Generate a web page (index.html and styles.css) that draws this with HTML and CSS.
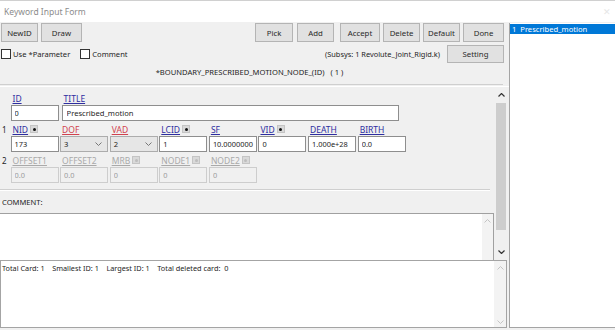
FILE: index.html
```html
<!DOCTYPE html>
<html lang="en">
<head>
  <meta charset="UTF-8">
  <title>Keyword Input Form</title>
  <link rel="stylesheet" href="styles.css">
</head>
<body>
  <div class="titlebar">
    <span class="title">Keyword Input Form</span>
    <span class="close">&#x2715;</span>
  </div>

  <div class="main">
    <div class="form">
      <div class="toolbar">
        <button class="btn b-newid">NewID</button>
        <button class="btn b-draw">Draw</button>
        <button class="btn b-pick">Pick</button>
        <button class="btn b-add">Add</button>
        <button class="btn b-accept">Accept</button>
        <button class="btn b-delete">Delete</button>
        <button class="btn b-default">Default</button>
        <button class="btn b-done">Done</button>
      </div>

      <div class="optrow">
        <label class="check"><span class="box"></span>Use *Parameter</label>
        <label class="check"><span class="box"></span>Comment</label>
        <span class="subsys">(Subsys: 1 Revolute_Joint_Rigid.k)</span>
        <button class="btn b-setting">Setting</button>
      </div>

      <div class="heading">*BOUNDARY_PRESCRIBED_MOTION_NODE_(ID)&nbsp;&nbsp;&nbsp;( 1 )</div>

      <div class="scrollarea">
        <div class="cards">
          <!-- card 0 -->
          <div class="card">
            <span class="num"></span>
            <div class="field">
              <span class="lbl"><u class="blue">ID</u></span>
              <input class="inp" value="0">
            </div>
            <div class="field title-field">
              <span class="lbl"><u class="blue">TITLE</u></span>
              <input class="inp" value="Prescribed_motion">
            </div>
          </div>

          <!-- card 1 -->
          <div class="card">
            <span class="num">1</span>
            <div class="field">
              <span class="lbl"><u class="blue">NID</u><span class="dot"></span></span>
              <input class="inp" value="173">
            </div>
            <div class="field">
              <span class="lbl"><u class="red">DOF</u></span>
              <div class="select">3<svg width="7" height="4" viewBox="0 0 7 4"><polyline points="0.5,0.5 3.5,3.5 6.5,0.5" fill="none" stroke="#777" stroke-width="1"/></svg></div>
            </div>
            <div class="field">
              <span class="lbl"><u class="red">VAD</u></span>
              <div class="select">2<svg width="7" height="4" viewBox="0 0 7 4"><polyline points="0.5,0.5 3.5,3.5 6.5,0.5" fill="none" stroke="#777" stroke-width="1"/></svg></div>
            </div>
            <div class="field">
              <span class="lbl"><u class="blue">LCID</u><span class="dot"></span></span>
              <input class="inp" value="1">
            </div>
            <div class="field">
              <span class="lbl"><u class="blue">SF</u></span>
              <input class="inp" value="10.0000000">
            </div>
            <div class="field">
              <span class="lbl"><u class="blue">VID</u><span class="dot"></span></span>
              <input class="inp" value="0">
            </div>
            <div class="field">
              <span class="lbl"><u class="blue">DEATH</u></span>
              <input class="inp" value="1.000e+28">
            </div>
            <div class="field">
              <span class="lbl"><u class="blue">BIRTH</u></span>
              <input class="inp" value="0.0">
            </div>
          </div>

          <!-- card 2 (disabled) -->
          <div class="card off">
            <span class="num">2</span>
            <div class="field">
              <span class="lbl"><u>OFFSET1</u></span>
              <input class="inp" value="0.0" disabled>
            </div>
            <div class="field">
              <span class="lbl"><u>OFFSET2</u></span>
              <input class="inp" value="0.0" disabled>
            </div>
            <div class="field">
              <span class="lbl"><u>MRB</u><span class="dot"></span></span>
              <input class="inp" value="0" disabled>
            </div>
            <div class="field">
              <span class="lbl"><u>NODE1</u><span class="dot"></span></span>
              <input class="inp" value="0" disabled>
            </div>
            <div class="field">
              <span class="lbl"><u>NODE2</u><span class="dot"></span></span>
              <input class="inp" value="0" disabled>
            </div>
          </div>

          <div class="sep"></div>
          <div class="comment-label">COMMENT:</div>
          <div class="comment">
            <div class="comment-text"></div>
            <div class="minibar">
              <svg width="7" height="4" viewBox="0 0 7 4"><polyline points="0.5,3.5 3.5,0.5 6.5,3.5" fill="none" stroke="#c4c4c4" stroke-width="1"/></svg>
            </div>
          </div>
        </div>

        <div class="vscroll">
          <svg class="arrow" width="7" height="4" viewBox="0 0 7 4"><polyline points="0.5,3.5 3.5,0.5 6.5,3.5" fill="none" stroke="#333" stroke-width="1.2"/></svg>
          <div class="thumb"></div>
          <svg class="arrow" width="7" height="4" viewBox="0 0 7 4"><polyline points="0.5,0.5 3.5,3.5 6.5,0.5" fill="none" stroke="#333" stroke-width="1.2"/></svg>
        </div>
      </div>

      <div class="status">
        <div class="status-text">Total Card: 1&nbsp;&nbsp;&nbsp;&nbsp;Smallest ID: 1&nbsp;&nbsp;&nbsp;&nbsp;Largest ID: 1&nbsp;&nbsp;&nbsp;&nbsp;Total deleted card:&nbsp;&nbsp;0</div>
        <div class="minibar tall">
          <svg width="7" height="4" viewBox="0 0 7 4"><polyline points="0.5,3.5 3.5,0.5 6.5,3.5" fill="none" stroke="#c4c4c4" stroke-width="1"/></svg>
          <svg width="7" height="4" viewBox="0 0 7 4"><polyline points="0.5,0.5 3.5,3.5 6.5,0.5" fill="none" stroke="#c4c4c4" stroke-width="1"/></svg>
        </div>
      </div>
    </div>

    <div class="list">
      <div class="item selected">1&nbsp;&nbsp;Prescribed_motion</div>
    </div>
  </div>
</body>
</html>
```

FILE: styles.css
```css
body {
  margin: 0;
  width: 615px;
  height: 330px;
  overflow: hidden;
  background-color: #f0f0f0;
  font-family: "Noto Sans", "Open Sans", sans-serif;
  font-size: 7.6px;
  color: #1e1e1e;
}

.titlebar {
  height: 21px;
  border-top: 1px solid #d0d0d0;
  background-color: #fff;
  display: flex;
  align-items: center;
  justify-content: space-between;
  padding: 0 4px;
  color: #8c8c8c;
  font-size: 8.5px;
}

.close {
  color: #e6e6e6;
  font-size: 9px;
}

.main {
  display: flex;
  height: 306px;
}

.form {
  width: 509px;
  display: flex;
  flex-direction: column;
}

/* buttons */
.btn {
  font-family: inherit;
  font-size: 7.8px;
  color: #2a2a2a;
  height: 19px;
  padding: 0;
  background-color: #e1e1e1;
  border: 1px solid #b4b4b4;
  border-radius: 0;
}

.toolbar {
  display: flex;
  padding-top: 1px;
  height: 20px;
}

.b-newid { width: 37px; margin-left: 1px; }
.b-draw { width: 41px; margin-left: 3px; }
.b-pick { width: 38px; margin-left: auto; }
.b-add { width: 37px; margin-left: 4px; }
.b-accept { width: 40px; margin-left: 6px; }
.b-delete { width: 37px; margin-left: 3px; }
.b-default { width: 37px; margin-left: 3px; }
.b-done { width: 41px; margin-left: 3px; margin-right: 5px; }
.b-setting { width: 57px; height: 18px; margin-right: 5px; }

.optrow {
  display: flex;
  align-items: center;
  height: 18px;
  margin-top: 2px;
  font-size: 7.6px;
}

.check {
  display: flex;
  align-items: center;
  margin-left: 1px;
  margin-right: 9px;
}

.box {
  width: 8px;
  height: 8px;
  border: 1px solid #333;
  background-color: #fff;
  margin-right: 2px;
}

.subsys {
  margin-left: auto;
  margin-right: 7px;
  font-size: 7.4px;
}

.heading {
  height: 19px;
  padding-bottom: 2px;
  display: flex;
  align-items: center;
  justify-content: center;
  padding-right: 4px;
  border-bottom: 1px solid #cfcfcf;
  margin-right: 6px;
}

/* scrolling card area */
.scrollarea {
  display: flex;
  height: 175px;
  margin-top: 1px;
  padding-right: 2px;
  border-top: 1px solid #fff;
  box-sizing: border-box;
}

.cards {
  width: 495px;
  padding-top: 6px;
  overflow: hidden;
  display: flex;
  flex-direction: column;
}

.card {
  display: flex;
  margin-bottom: 2.5px;
}

.num {
  width: 10.5px;
  height: 11px;
  line-height: 11px;
  padding-left: 2px;
  box-sizing: border-box;
  font-size: 8px;
}

.field {
  width: 48px;
  margin-right: 1.6px;
  display: flex;
  flex-direction: column;
}

.title-field {
  width: 337px;
  margin-left: 1.5px;
}

.lbl {
  height: 11px;
  line-height: 11px;
  margin-bottom: 1.5px;
  padding-left: 2px;
  display: flex;
  align-items: center;
  font-size: 8.5px;
}

.blue { color: #2e2ea0; }
.red { color: #d0424e; }
.off .lbl u { color: #a9a9a9; }

.dot {
  width: 8px;
  height: 8px;
  margin-left: 2px;
  background-color: #d9d9d9;
  border: 1px solid #c4c4c4;
  box-sizing: border-box;
  display: flex;
  align-items: center;
  justify-content: center;
}

.dot::after {
  content: "";
  width: 3px;
  height: 3px;
  border-radius: 50%;
  background-color: #111;
}

.off .dot::after {
  background-color: #bdbdbd;
}

.inp {
  width: 48px;
  height: 16px;
  box-sizing: border-box;
  margin: 0;
  padding: 0 1px 0 3px;
  border: 1px solid #8e8e8e;
  background-color: #fff;
  font-family: inherit;
  font-size: 7.4px;
  color: #1e1e1e;
  outline: none;
}

.title-field .inp {
  width: 337px;
  padding-left: 4px;
  font-size: 7.6px;
}

.off .inp {
  background-color: #f0f0f0;
  border-color: #cdcdcd;
  color: #9c9c9c;
}

.select {
  height: 16px;
  box-sizing: border-box;
  border: 1px solid #acacac;
  background-color: #e6e6e6;
  padding: 0 5px 0 3px;
  display: flex;
  align-items: center;
  justify-content: space-between;
}

.sep {
  margin-top: 3px;
  margin-right: 5px;
  border-top: 1px solid #cfcfcf;
  border-bottom: 1px solid #fff;
}

.comment-label {
  height: 11px;
  line-height: 11px;
  margin-top: 6px;
  padding-left: 2px;
}

.comment {
  margin-top: 5px;
  flex: 1;
  display: flex;
  background-color: #fff;
  border-top: 1px solid #a0a0a0;
  border-right: 1px solid #a0a0a0;
  width: 494px;
  box-sizing: border-box;
}

.comment-text {
  flex: 1;
}

.minibar {
  width: 11px;
  background-color: #f3f3f3;
  display: flex;
  flex-direction: column;
  align-items: center;
  padding-top: 5px;
}

.minibar.tall {
  justify-content: space-between;
  padding-bottom: 3px;
  width: 12px;
}

.vscroll {
  width: 12px;
  display: flex;
  flex-direction: column;
  align-items: center;
}

.vscroll .arrow {
  margin: 6px 0;
}

.thumb {
  width: 10px;
  flex: 1;
  background-color: #cdcdcd;
  margin-bottom: 14px;
}

/* status panel */
.status {
  height: 68px;
  width: 507px;
  box-sizing: border-box;
  border: 1px solid #a4a4a4;
  background-color: #fff;
  display: flex;
}

.status-text {
  flex: 1;
  padding: 2px 1px;
  font-size: 7.3px;
}

/* keyword list */
.list {
  flex: 1;
  background-color: #fff;
  border-left: 1px solid #a4a4a4;
  border-bottom: 1px solid #a4a4a4;
  margin-top: 1px;
  padding-top: 1px;
}

.item {
  height: 10px;
  line-height: 10px;
  padding-left: 2px;
  font-size: 7.6px;
}

.selected {
  background-color: #0078d7;
  color: #fff;
}
```
